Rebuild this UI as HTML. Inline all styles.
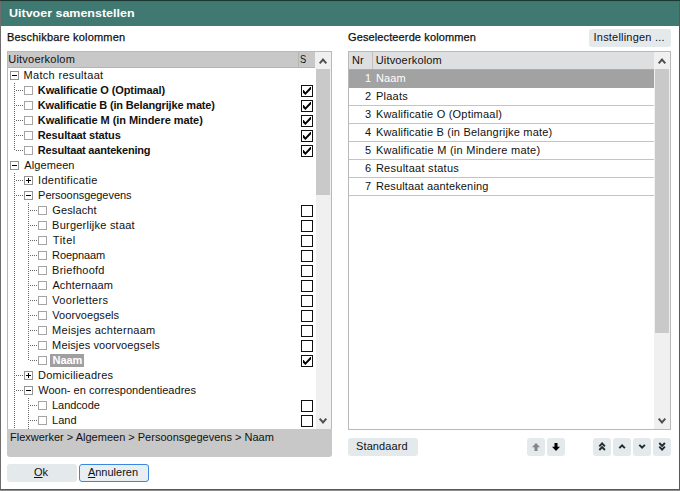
<!DOCTYPE html>
<html><head><meta charset="utf-8"><title>Uitvoer samenstellen</title>
<style>
html,body{margin:0;padding:0;}
body{width:680px;height:491px;overflow:hidden;background:#fff;position:relative;font-family:"Liberation Sans",sans-serif;font-size:11px;color:#111;}
div,span{position:absolute;box-sizing:border-box;white-space:nowrap;}
.t{line-height:15px;height:15px;}
.b{font-weight:bold;}
.box{width:9px;height:9px;border:1px solid #939393;background:#fff;}
.ck{width:12px;height:12px;border:1px solid #111;background:#fff;}
.hl{background:#c8c8c8;}
.dv{width:1px;background-image:linear-gradient(#686868 50%,transparent 50%);background-size:1px 2px;}
.dh{height:1px;background-image:linear-gradient(90deg,#686868 50%,transparent 50%);background-size:2px 1px;}
.btn{background:#e4e9ec;border-radius:3px;text-align:center;line-height:18px;height:18px;}
svg{position:absolute;overflow:visible;}
.rr{left:349px;width:305px;height:18px;border-bottom:1px solid #c4c4c4;line-height:17px;}
.rr .n{left:0;width:22px;text-align:right;}
.rr .x{left:27px;}
</style></head><body>

<div style="left:0;top:0;width:680px;height:1px;background:#1d3833"></div>
<div style="left:0;top:1px;width:680px;height:1px;background:#5c6664"></div>
<div style="left:0;top:2px;width:680px;height:24px;background:#3f7972"></div>
<div style="left:0;top:1px;width:1px;height:489px;background:#6e6e6e"></div>
<div style="left:679px;top:1px;width:1px;height:489px;background:#585858"></div>
<div style="left:0;top:489px;width:680px;height:1px;background:#5a5a5a"></div>
<div style="left:0;top:490px;width:680px;height:1px;background:#8c8c8c"></div>
<div style="left:8.7px;top:6px;font-weight:bold;font-size:11.5px;line-height:15px;color:#fff;transform-origin:0 50%;transform:scaleX(1.085)">Uitvoer samenstellen</div>
<div style="left:7px;top:30px;line-height:15px;letter-spacing:0.2px;-webkit-text-stroke:0.25px #111">Beschikbare kolommen</div>
<div style="left:348px;top:30px;line-height:15px;letter-spacing:0.12px;-webkit-text-stroke:0.25px #111">Geselecteerde kolommen</div>
<div class="btn" style="left:589px;top:29px;width:82px;"></div>
<div class="t" style="left:593.6px;top:30px;letter-spacing:0.2px">Instellingen ...</div>
<div style="left:7px;top:51px;width:325px;height:378px;border:1px solid #b9b9b9;border-bottom:none;background:#fff"></div>
<div style="left:8px;top:52px;width:307px;height:16px;background:#c8c8c8;border-bottom:1px solid #b4b4b4"></div>
<div style="left:298px;top:52px;width:1px;height:15px;background:#b4b4b4"></div>
<div class="t" style="left:8.3px;top:52px;letter-spacing:0.21px">Uitvoerkolom</div>
<div class="t" style="left:300.2px;top:52px;transform-origin:0 50%;transform:scaleX(0.85)">S</div>
<div style="left:315px;top:52px;width:16px;height:17px;background:#f0f0f0"></div>
<div style="left:316px;top:69px;width:15px;height:360px;background:#f0f0f0"></div>
<div style="left:316px;top:69px;width:14px;height:126px;background:#c9c9c9"></div>
<svg style="left:319px;top:58px" width="8" height="6" viewBox="0 0 8 6"><path d="M0.7 5.3 L4 1.6 L7.3 5.3" fill="none" stroke="#505050" stroke-width="2"/></svg>
<svg style="left:319px;top:418px" width="8" height="6" viewBox="0 0 8 6"><path d="M0.7 0.7 L4 4.4 L7.3 0.7" fill="none" stroke="#505050" stroke-width="2"/></svg>
<div class="box" style="left:10px;top:71px"></div>
<div style="left:12px;top:75px;width:5px;height:1px;background:#000"></div>
<div class="t" style="left:23.5px;top:68px;letter-spacing:0.32px">Match resultaat</div>
<div class="dh" style="left:16px;top:90px;width:8px"></div>
<div class="box" style="left:24px;top:86px;border-color:#a4a4a4"></div>
<div class="t b" style="left:37.8px;top:83px;letter-spacing:-0.09px">Kwalificatie O (Optimaal)</div>
<div class="ck" style="left:301px;top:85px"></div>
<svg style="left:301px;top:85px" width="12" height="12" viewBox="0 0 12 12"><path d="M2 5 L2 7.7 L4.4 10.1 L10 4.2 L10 1.9 L9.3 1.9 L4.4 7.2 L2.7 5 Z" fill="#000"/></svg>
<div class="dh" style="left:16px;top:105px;width:8px"></div>
<div class="box" style="left:24px;top:101px;border-color:#a4a4a4"></div>
<div class="t b" style="left:37.8px;top:98px;letter-spacing:-0.16px">Kwalificatie B (in Belangrijke mate)</div>
<div class="ck" style="left:301px;top:100px"></div>
<svg style="left:301px;top:100px" width="12" height="12" viewBox="0 0 12 12"><path d="M2 5 L2 7.7 L4.4 10.1 L10 4.2 L10 1.9 L9.3 1.9 L4.4 7.2 L2.7 5 Z" fill="#000"/></svg>
<div class="dh" style="left:16px;top:120px;width:8px"></div>
<div class="box" style="left:24px;top:116px;border-color:#a4a4a4"></div>
<div class="t b" style="left:37.8px;top:113px;letter-spacing:-0.06px">Kwalificatie M (in Mindere mate)</div>
<div class="ck" style="left:301px;top:115px"></div>
<svg style="left:301px;top:115px" width="12" height="12" viewBox="0 0 12 12"><path d="M2 5 L2 7.7 L4.4 10.1 L10 4.2 L10 1.9 L9.3 1.9 L4.4 7.2 L2.7 5 Z" fill="#000"/></svg>
<div class="dh" style="left:16px;top:135px;width:8px"></div>
<div class="box" style="left:24px;top:131px;border-color:#a4a4a4"></div>
<div class="t b" style="left:37.8px;top:128px;letter-spacing:-0.13px">Resultaat status</div>
<div class="ck" style="left:301px;top:130px"></div>
<svg style="left:301px;top:130px" width="12" height="12" viewBox="0 0 12 12"><path d="M2 5 L2 7.7 L4.4 10.1 L10 4.2 L10 1.9 L9.3 1.9 L4.4 7.2 L2.7 5 Z" fill="#000"/></svg>
<div class="dh" style="left:16px;top:150px;width:8px"></div>
<div class="box" style="left:24px;top:146px;border-color:#a4a4a4"></div>
<div class="t b" style="left:37.8px;top:143px;letter-spacing:-0.2px">Resultaat aantekening</div>
<div class="ck" style="left:301px;top:145px"></div>
<svg style="left:301px;top:145px" width="12" height="12" viewBox="0 0 12 12"><path d="M2 5 L2 7.7 L4.4 10.1 L10 4.2 L10 1.9 L9.3 1.9 L4.4 7.2 L2.7 5 Z" fill="#000"/></svg>
<div class="box" style="left:10px;top:161px"></div>
<div style="left:12px;top:165px;width:5px;height:1px;background:#000"></div>
<div class="t" style="left:24.3px;top:158px;letter-spacing:0.09px">Algemeen</div>
<div class="dh" style="left:16px;top:180px;width:8px"></div>
<div class="box" style="left:24px;top:176px"></div>
<div style="left:26px;top:180px;width:5px;height:1px;background:#000"></div>
<div style="left:28px;top:178px;width:1px;height:5px;background:#000"></div>
<div class="t" style="left:38.0px;top:173px;letter-spacing:0.32px">Identificatie</div>
<div class="dh" style="left:16px;top:195px;width:8px"></div>
<div class="box" style="left:24px;top:191px"></div>
<div style="left:26px;top:195px;width:5px;height:1px;background:#000"></div>
<div class="t" style="left:38.1px;top:188px;letter-spacing:-0.05px">Persoonsgegevens</div>
<div class="dh" style="left:30px;top:210px;width:8px"></div>
<div class="box" style="left:38px;top:206px;border-color:#a4a4a4"></div>
<div class="t" style="left:52.2px;top:203px;letter-spacing:0.15px">Geslacht</div>
<div class="ck" style="left:301px;top:205px"></div>
<div class="dh" style="left:30px;top:225px;width:8px"></div>
<div class="box" style="left:38px;top:221px;border-color:#a4a4a4"></div>
<div class="t" style="left:52.1px;top:218px;letter-spacing:0.23px">Burgerlijke staat</div>
<div class="ck" style="left:301px;top:220px"></div>
<div class="dh" style="left:30px;top:240px;width:8px"></div>
<div class="box" style="left:38px;top:236px;border-color:#a4a4a4"></div>
<div class="t" style="left:52.8px;top:233px;letter-spacing:0.52px">Titel</div>
<div class="ck" style="left:301px;top:235px"></div>
<div class="dh" style="left:30px;top:255px;width:8px"></div>
<div class="box" style="left:38px;top:251px;border-color:#a4a4a4"></div>
<div class="t" style="left:52.1px;top:248px;letter-spacing:-0.09px">Roepnaam</div>
<div class="ck" style="left:301px;top:250px"></div>
<div class="dh" style="left:30px;top:270px;width:8px"></div>
<div class="box" style="left:38px;top:266px;border-color:#a4a4a4"></div>
<div class="t" style="left:52.1px;top:263px;letter-spacing:0.25px">Briefhoofd</div>
<div class="ck" style="left:301px;top:265px"></div>
<div class="dh" style="left:30px;top:285px;width:8px"></div>
<div class="box" style="left:38px;top:281px;border-color:#a4a4a4"></div>
<div class="t" style="left:52.4px;top:278px;letter-spacing:0.14px">Achternaam</div>
<div class="ck" style="left:301px;top:280px"></div>
<div class="dh" style="left:30px;top:300px;width:8px"></div>
<div class="box" style="left:38px;top:296px;border-color:#a4a4a4"></div>
<div class="t" style="left:52.3px;top:293px;letter-spacing:0.3px">Voorletters</div>
<div class="ck" style="left:301px;top:295px"></div>
<div class="dh" style="left:30px;top:315px;width:8px"></div>
<div class="box" style="left:38px;top:311px;border-color:#a4a4a4"></div>
<div class="t" style="left:52.3px;top:308px;letter-spacing:0.07px">Voorvoegsels</div>
<div class="ck" style="left:301px;top:310px"></div>
<div class="dh" style="left:30px;top:330px;width:8px"></div>
<div class="box" style="left:38px;top:326px;border-color:#a4a4a4"></div>
<div class="t" style="left:52.1px;top:323px;letter-spacing:0.28px">Meisjes achternaam</div>
<div class="ck" style="left:301px;top:325px"></div>
<div class="dh" style="left:30px;top:345px;width:8px"></div>
<div class="box" style="left:38px;top:341px;border-color:#a4a4a4"></div>
<div class="t" style="left:52.1px;top:338px;letter-spacing:0.13px">Meisjes voorvoegsels</div>
<div class="ck" style="left:301px;top:340px"></div>
<div class="dh" style="left:30px;top:360px;width:8px"></div>
<div class="box" style="left:38px;top:356px;border-color:#a4a4a4"></div>
<div style="left:50px;top:354px;width:34px;height:13px;background:#9f9f9f"></div>
<div class="t b" style="left:52.6px;top:353px;color:#fff;letter-spacing:-0.12px">Naam</div>
<div class="ck" style="left:301px;top:355px"></div>
<svg style="left:301px;top:355px" width="12" height="12" viewBox="0 0 12 12"><path d="M2 5 L2 7.7 L4.4 10.1 L10 4.2 L10 1.9 L9.3 1.9 L4.4 7.2 L2.7 5 Z" fill="#000"/></svg>
<div class="dh" style="left:16px;top:375px;width:8px"></div>
<div class="box" style="left:24px;top:371px"></div>
<div style="left:26px;top:375px;width:5px;height:1px;background:#000"></div>
<div style="left:28px;top:373px;width:1px;height:5px;background:#000"></div>
<div class="t" style="left:38.1px;top:368px;letter-spacing:0.21px">Domicilieadres</div>
<div class="dh" style="left:16px;top:390px;width:8px"></div>
<div class="box" style="left:24px;top:386px"></div>
<div style="left:26px;top:390px;width:5px;height:1px;background:#000"></div>
<div class="t" style="left:38.2px;top:383px;letter-spacing:0.03px">Woon- en correspondentieadres</div>
<div class="dh" style="left:30px;top:405px;width:8px"></div>
<div class="box" style="left:38px;top:401px;border-color:#a4a4a4"></div>
<div class="t" style="left:52.1px;top:398px;letter-spacing:-0.09px">Landcode</div>
<div class="ck" style="left:301px;top:400px"></div>
<div class="dh" style="left:30px;top:420px;width:8px"></div>
<div class="box" style="left:38px;top:416px;border-color:#a4a4a4"></div>
<div class="t" style="left:52.1px;top:413px;letter-spacing:-0.01px">Land</div>
<div class="ck" style="left:301px;top:415px"></div>
<div class="dv" style="left:14px;top:83px;height:68px"></div>
<div class="dv" style="left:14px;top:173px;height:256px"></div>
<div class="dv" style="left:28px;top:203px;height:158px"></div>
<div class="dv" style="left:28px;top:398px;height:31px"></div>
<div style="left:7px;top:429px;width:325px;height:27.5px;background:#c8c8c8;border-radius:0 0 3px 3px"></div>
<div class="t" style="left:10px;top:430px;">Flexwerker &gt; Algemeen &gt; Persoonsgegevens &gt; Naam</div>
<div class="btn" style="left:7px;top:464px;width:70px;line-height:16px;text-indent:-2px"><u>O</u>k</div>
<div class="btn" style="left:79px;top:464px;width:70px;border:1px solid #3a88de;line-height:14px;text-indent:-2px;background:#e8eef2"><u>A</u>nnuleren</div>
<div style="left:348px;top:51px;width:323px;height:379px;border:1px solid #b9b9b9;background:#fff"></div>
<div style="left:349px;top:52px;width:305px;height:18px;background:#dedfe1;border-bottom:1px solid #ababab"></div>
<div style="left:372px;top:52px;width:1px;height:17px;background:#c0c0c0"></div>
<div class="t" style="left:352px;top:53px;">Nr</div>
<div class="t" style="left:375.7px;top:53px;letter-spacing:0.17px">Uitvoerkolom</div>
<div style="left:654px;top:52px;width:16px;height:377px;background:#f0f0f0"></div>
<div style="left:655px;top:69px;width:14px;height:264px;background:#c9c9c9"></div>
<svg style="left:658px;top:58px" width="8" height="6" viewBox="0 0 8 6"><path d="M0.7 5.3 L4 1.6 L7.3 5.3" fill="none" stroke="#505050" stroke-width="2"/></svg>
<svg style="left:658px;top:418px" width="8" height="6" viewBox="0 0 8 6"><path d="M0.7 0.7 L4 4.4 L7.3 0.7" fill="none" stroke="#505050" stroke-width="2"/></svg>
<div class="rr" style="top:70px;background:#a2a2a2;color:#fff;border-bottom-color:#a2a2a2;"><span class="n">1</span><span class="x" style="left:26.9px;letter-spacing:0.11px">Naam</span></div>
<div class="rr" style="top:88px;"><span class="n">2</span><span class="x" style="left:26.9px;letter-spacing:0.25px">Plaats</span></div>
<div class="rr" style="top:106px;"><span class="n">3</span><span class="x" style="left:26.9px;letter-spacing:0.21px">Kwalificatie O (Optimaal)</span></div>
<div class="rr" style="top:124px;"><span class="n">4</span><span class="x" style="left:26.9px;letter-spacing:0.2px">Kwalificatie B (in Belangrijke mate)</span></div>
<div class="rr" style="top:142px;"><span class="n">5</span><span class="x" style="left:26.9px;letter-spacing:0.25px">Kwalificatie M (in Mindere mate)</span></div>
<div class="rr" style="top:160px;"><span class="n">6</span><span class="x" style="left:26.9px;letter-spacing:0.27px">Resultaat status</span></div>
<div class="rr" style="top:178px;"><span class="n">7</span><span class="x" style="left:26.9px;letter-spacing:0.15px">Resultaat aantekening</span></div>
<div class="btn" style="left:348px;top:438px;width:70px;"></div>
<div class="t" style="left:356.1px;top:439px;letter-spacing:0.09px">Standaard</div>
<div class="btn" style="left:527px;top:438px;width:18px;"></div>
<div class="btn" style="left:547px;top:438px;width:18px;"></div>
<div class="btn" style="left:593px;top:438px;width:18px;"></div>
<div class="btn" style="left:613px;top:438px;width:18px;"></div>
<div class="btn" style="left:633px;top:438px;width:18px;"></div>
<div class="btn" style="left:653px;top:438px;width:18px;"></div>
<svg style="left:531.6px;top:443px" width="8" height="8" viewBox="0 0 8 8"><path d="M4 0 L8 4.2 L5.5 4.2 L5.5 8 L2.5 8 L2.5 4.2 L0 4.2 Z" fill="#858585"/></svg>
<svg style="left:551.6px;top:443px" width="8" height="8" viewBox="0 0 8 8"><path d="M4 8 L8 3.8 L5.5 3.8 L5.5 0 L2.5 0 L2.5 3.8 L0 3.8 Z" fill="#000"/></svg>
<svg style="left:598px;top:442px" width="8" height="9" viewBox="0 0 8 9"><path d="M1.3 4.3 L4.1 1.4 L6.9 4.3 M1.3 8 L4.1 5.1 L6.9 8" fill="none" stroke="#1e2a31" stroke-width="1.9"/></svg>
<svg style="left:618px;top:444px" width="8" height="5" viewBox="0 0 8 5"><path d="M1.3 4.2 L4.1 1.3 L6.9 4.2" fill="none" stroke="#1e2a31" stroke-width="1.9"/></svg>
<svg style="left:638px;top:444px" width="8" height="5" viewBox="0 0 8 5"><path d="M1.3 0.8 L4.1 3.7 L6.9 0.8" fill="none" stroke="#1e2a31" stroke-width="1.9"/></svg>
<svg style="left:658px;top:442px" width="8" height="9" viewBox="0 0 8 9"><path d="M1.3 1 L4.1 3.9 L6.9 1 M1.3 4.7 L4.1 7.6 L6.9 4.7" fill="none" stroke="#1e2a31" stroke-width="1.9"/></svg>
</body></html>
